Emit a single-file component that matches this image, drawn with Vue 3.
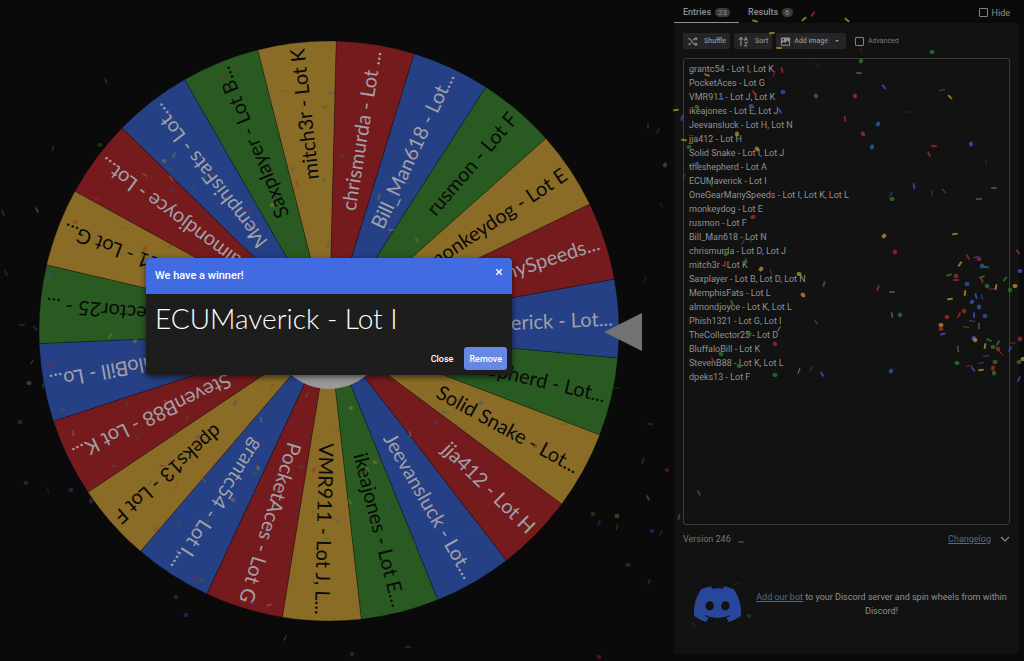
<script setup>
import { ref, computed } from 'vue'

const entries = [
  ['grantc54 - Lot I, Lot K', 'grantc54 - Lot I,...'],
  ['PocketAces - Lot G', 'PocketAces - Lot G'],
  ['VMR911 - Lot J, Lot K', 'VMR911 - Lot J, L...'],
  ['ikeajones - Lot E, Lot J', 'ikeajones - Lot E...'],
  ['Jeevansluck - Lot H, Lot N', 'Jeevansluck - Lot...'],
  ['jja412 - Lot H', 'jja412 - Lot H'],
  ['Solid Snake - Lot I, Lot J', 'Solid Snake - Lot...'],
  ['theshepherd - Lot A', 'theshepherd - Lot...'],
  ['ECUMaverick - Lot I', 'ECUMaverick - Lot...'],
  ['OneGearManySpeeds - Lot I, Lot K, Lot L', 'OneGearManySpeeds...'],
  ['monkeydog - Lot E', 'monkeydog - Lot E'],
  ['rusmon - Lot F', 'rusmon - Lot F'],
  ['Bill_Man618 - Lot N', 'Bill_Man618 - Lot...'],
  ['chrismurda - Lot D, Lot J', 'chrismurda - Lot ...'],
  ['mitch3r - Lot K', 'mitch3r - Lot K'],
  ['Saxplayer - Lot B, Lot D, Lot N', 'Saxplayer - Lot B...'],
  ['MemphisFats - Lot L', 'MemphisFats - Lot...'],
  ['almondjoyce - Lot K, Lot L', 'almondjoyce - Lot...'],
  ['Phish1321 - Lot G, Lot I', 'Phish1321 - Lot G...'],
  ['TheCollector25 - Lot D', 'TheCollector25 - ...'],
  ['BluffaloBill - Lot K', 'BluffaloBill - Lo...'],
  ['StevenB88 - Lot K, Lot L', 'StevenB88 - Lot K...'],
  ['dpeks13 - Lot F', 'dpeks13 - Lot F']
]
const text = ref(entries.map(e => e[0]).join('\n'))
const hidden = ref(false)
const advanced = ref(false)
const open = ref(true)

const CX = 329
const CY = 331
const R = 290
const winner = 8
const step = 360 / entries.length
const palette = ['blue', 'red', 'gold', 'green']
const point = a => {
  const r = (a * Math.PI) / 180
  return `${(CX + R * Math.cos(r)).toFixed(2)} ${(CY + R * Math.sin(r)).toFixed(2)}`
}
const slices = computed(() =>
  entries.map(([, label], i) => {
    const angle = -2.5 - (i - winner) * step
    const tone = i === entries.length - 1 ? 'gold' : palette[i % 4]
    return {
      label,
      tone,
      angle,
      d: `M${CX} ${CY}L${point(angle - step / 2)}A${R} ${R} 0 0 1 ${point(angle + step / 2)}Z`
    }
  })
)

// Each piece: x, y, colour, shape (o oval, s strip, t thin), angle
const bright = `755,21,y,s,15 772,33,y,s,-8 779,48,y,s,0 804,19,y,s,-40 813,14,r,s,-55 847,20,y,s,40 932,52,g,o,0 861,61,g,o,-50
859,73,g,s,0 782,70,r,s,75 774,74,r,t,-70 707,75,y,s,20 754,93,r,s,60 783,92,b,o,-10 816,96,g,o,80 855,96,r,o,70 884,87,b,s,50
942,90,b,t,-15 950,97,y,s,45 721,99,b,s,0 751,106,b,o,10 697,107,g,o,20 676,110,y,s,-10 682,118,b,s,-75 780,111,b,s,60 845,119,r,s,75
878,124,b,o,-50 863,134,r,o,35 737,134,y,o,90 684,140,y,s,5 689,147,g,o,-20 872,147,b,o,-65 934,146,r,s,5 929,154,r,s,65 971,144,b,o,70
757,149,y,o,45 697,164,b,o,70 684,177,r,t,-65 711,184,g,s,60 914,186,b,s,80 891,194,b,t,-60 892,199,g,o,10 944,191,g,t,50 932,193,r,t,75
994,188,g,s,0 979,199,y,t,0 753,217,r,o,-15 884,236,y,o,-40 955,234,y,s,-5 895,252,r,o,-50 726,254,g,o,-30 710,238,b,o,70 743,242,b,t,-60
750,240,g,t,60 1018,252,r,s,50 968,257,r,s,65 976,257,b,t,-20 979,259,r,o,10 745,261,g,s,-60 725,264,r,s,-80 761,269,y,o,-55 771,272,r,t,65
799,274,y,o,0 824,284,g,s,-70 878,288,r,s,-65 892,292,g,s,0 803,295,y,o,35 732,303,g,s,70 816,322,g,t,60 892,315,g,s,80 900,315,g,o,55
779,329,y,t,-60 749,334,g,o,0 775,344,r,o,40 721,354,g,o,20 713,360,r,s,60 739,366,g,o,30 775,375,g,o,0 799,371,y,t,-70 811,369,r,t,-65
822,374,b,s,60 891,371,b,o,-50 960,264,y,s,-55 982,266,b,o,-60 986,267,g,s,5 949,275,g,s,-15 956,276,r,o,0 956,280,r,s,0 982,277,g,s,-20
982,280,r,s,70 1005,279,g,s,-50 1020,271,b,o,0 967,284,b,o,15 987,286,g,o,40 992,289,r,t,0 996,287,y,s,-80 1010,290,g,o,70 1015,286,y,o,0
965,293,y,s,-80 950,299,y,s,-10 976,296,b,s,75 982,297,b,t,80 972,302,b,o,-40 979,307,b,o,80 964,311,r,o,40 959,315,r,s,-65 947,317,r,o,5
974,315,b,s,90 985,316,b,o,25 972,321,b,t,10 941,325,y,o,0 941,329,r,o,0 943,334,b,s,-15 966,327,g,t,10 979,326,y,t,90 974,338,b,o,20
975,340,y,o,20 958,349,y,t,85 985,346,y,s,-80 989,340,g,s,25 993,347,g,o,0 998,349,r,o,70 998,343,g,s,-60 1001,353,r,t,45 1010,349,b,s,-65
1013,343,r,t,0 1020,339,r,o,-55 957,363,g,o,10 969,366,r,t,-15 973,369,b,s,55 981,370,y,s,-5 981,363,b,t,-10 986,356,b,t,-10 995,362,g,o,0
993,368,r,o,-60 994,373,g,o,70 1019,362,g,o,-20 1023,359,y,o,0 1019,379,b,s,-65`
const faint = `861,50,r,t,80 906,112,r,t,0 817,65,r,t,45 986,162,b,t,90 699,493,y,s,65 679,517,y,s,-75 741,542,y,s,0 737,584,r,t,-10 749,616,g,o,20 699,602,r,s,0 694,625,b,t,50
106,81,b,s,65 53,148,r,s,-70 100,145,g,o,0 3,213,g,s,65 37,210,y,s,65 237,66,r,s,0 223,76,r,o,80 283,91,g,t,0 331,93,b,s,0 325,107,g,o,-10
232,148,r,s,-70 174,155,y,s,-60 164,161,y,o,30 170,169,g,s,0 145,175,y,s,30 152,177,g,t,-80 171,178,y,s,60 193,187,g,s,-40 172,190,b,s,-30
213,174,r,o,0 227,176,g,t,55 221,185,g,s,20 204,177,g,o,70 292,169,g,o,0 297,183,r,s,60 324,180,g,s,-75 272,205,y,o,-50 250,210,r,o,20
97,199,r,s,10 127,207,g,t,0 126,228,g,t,0 75,222,r,o,0 145,249,r,o,-70 169,247,r,s,-45 295,240,b,o,80 303,249,r,s,-10 328,245,b,s,-80
648,126,r,s,85 658,131,r,s,-60 665,165,y,o,-60 661,205,b,t,55 342,155,g,s,40 414,156,r,s,20 407,183,g,s,0 379,197,y,s,-75 391,230,y,s,0
417,240,y,s,60 6,273,r,s,60 35,328,b,s,60 22,325,y,t,0 32,362,y,t,-60 29,383,y,o,-10 20,422,g,o,20 43,386,g,s,-80 50,276,b,o,0 143,256,g,s,0
110,336,y,s,-50 117,334,b,s,80 135,341,y,o,90 112,361,r,s,0 50,366,r,s,0 62,410,g,o,0 127,403,g,s,-65 166,402,y,s,45 235,403,b,o,-60
187,418,g,s,-65 261,420,y,s,70 272,386,r,t,-65 307,395,y,t,-60 73,433,y,s,80 138,437,b,s,-50 174,434,g,s,-80 198,437,b,o,30 645,280,g,t,-75
650,424,b,s,10 617,388,g,t,0 481,403,b,o,0 444,412,b,s,20 435,423,b,s,-60 389,404,b,t,0 351,408,y,o,-10 343,386,y,s,0 564,424,g,s,0
410,434,y,s,80 457,400,r,s,10 338,430,g,s,30 357,426,r,s,0 26,483,g,o,10 48,490,r,t,80 71,490,b,o,0 91,501,b,o,70 176,597,g,o,20 186,615,b,o,-10
285,638,y,t,-65 114,466,g,s,0 162,466,r,s,0 150,483,g,s,-70 176,487,r,t,-70 179,523,g,o,-60 156,529,r,s,-50 208,521,g,o,-30 233,500,y,o,0
258,468,y,o,60 255,474,g,o,30 301,467,g,s,0 314,470,r,o,70 255,494,b,t,10 196,579,r,o,30 202,580,g,o,0 252,603,b,o,70 269,605,y,s,-15
326,539,g,o,0 338,521,b,s,-50 204,480,y,t,40 643,461,g,s,-65 667,470,r,o,0 648,498,y,s,65 593,514,g,o,0 617,516,y,o,0 599,523,b,s,-65
617,527,y,t,-80 652,531,b,o,30 661,533,r,s,-65 628,565,g,o,0 649,582,g,s,-70 352,654,b,o,-70 408,647,r,s,0 599,657,r,o,0 472,532,g,s,-60
388,507,b,s,-80 415,545,r,s,70 434,462,r,t,-10 515,474,r,t,10 488,506,r,t,0 535,446,r,o,0 375,462,y,o,10 367,470,y,o,40 350,502,y,s,60`
const size = { o: [5, 4, 2], s: [6, 2, 1], t: [6, 1, 0] }
const parse = (src, kind) =>
  src.trim().split(/\s+/).map(p => {
    const [x, y, tone, shape, angle] = p.split(',')
    const [w, h, r] = size[shape]
    return { x: +x, y: +y, tone, angle, w, h, r, kind }
  })
const confetti = [...parse(faint, 'faint'), ...parse(bright, 'bright')]
</script>

<template>
  <div class="page">
    <main class="stage">
      <svg class="wheel" viewBox="0 0 658 661" role="img" aria-label="Wheel of names">
        <path v-for="s in slices" :key="s.label" :class="['slice', s.tone]" :d="s.d" />
        <text
          v-for="s in slices"
          :key="'t' + s.label"
          :class="['label', 'on-' + s.tone]"
          x="613"
          y="338"
          :transform="`rotate(${s.angle} ${CX} ${CY})`"
        >{{ s.label }}</text>
        <circle :cx="CX" :cy="CY" r="58" class="hub" />
        <path d="M604 332L642 313V351Z" class="pointer" />
      </svg>
      <section v-if="open" class="dialog" role="dialog" aria-labelledby="dialog-title">
        <header class="dialog-head">
          <h2 id="dialog-title">We have a winner!</h2>
          <button class="dismiss" type="button" aria-label="Dismiss" @click="open = false">
            <svg viewBox="0 0 8 8"><path d="M1.2 1.2L6.8 6.8M6.8 1.2L1.2 6.8" /></svg>
          </button>
        </header>
        <p class="winner">{{ entries[winner][0] }}</p>
        <footer class="dialog-foot">
          <button class="btn-text" type="button" @click="open = false">Close</button>
          <button class="btn-text primary" type="button">Remove</button>
        </footer>
      </section>
    </main>

    <aside class="side">
      <nav class="tabs">
        <button class="tab active" type="button">Entries <span class="count">23</span></button>
        <button class="tab" type="button">Results <span class="count">6</span></button>
        <label class="check hide"><input v-model="hidden" type="checkbox" />Hide</label>
      </nav>
      <div class="panel">
        <div class="toolbar">
          <button class="tool" type="button">
            <svg class="icon" viewBox="0 0 12 12"><path d="M1 3H3L8 9H10.6M1 9H3L4.3 7.4M6.6 4.6L8 3H10.6M9.2 1.4L10.9 3L9.2 4.6M9.2 7.4L10.9 9L9.2 10.6" /></svg>
            <span>Shuffle</span>
          </button>
          <button class="tool" type="button">
            <svg class="icon" viewBox="0 0 12 12"><path d="M3.200 11V2M1 4L3.200 1.600L5.400 4" /><path class="fine" d="M6.800 5.400L8.600 1.200L10.400 5.400M7.400 4H9.800M6.900 7H10.200L6.900 10.800H10.400" /></svg>
            <span>Sort</span>
          </button>
          <button class="tool image" type="button">
            <svg class="icon solid" viewBox="0 0 12 12"><path fill-rule="evenodd" d="M2 1.5H10A1 1 0 0 1 11 2.500V9.500A1 1 0 0 1 10 10.500H2A1 1 0 0 1 1 9.500V2.500A1 1 0 0 1 2 1.500ZM2 9.500H10V7L8 5L5.500 7.500L4 6.200L2 8ZM3.500 3A1 1 0 1 0 3.500 5A1 1 0 1 0 3.500 3Z" /></svg>
            <span>Add image</span>
            <svg class="caret" viewBox="0 0 6 4"><path d="M1 1H5L3 3Z" /></svg>
          </button>
          <label class="check small"><input v-model="advanced" type="checkbox" />Advanced</label>
        </div>
        <textarea v-model="text" class="entries" aria-label="Entries" spellcheck="false"></textarea>
        <div class="version">
          <span>Version 246</span>
          <a href="#changelog">Changelog</a>
          <svg class="chevron" viewBox="0 0 10 10"><path d="M1 3L5 7L9 3" /></svg>
        </div>
        <div class="bot">
          <svg class="discord" viewBox="0 0 127 96" aria-label="Discord" role="img">
            <path d="M107.700 8.070A105.150 105.150 0 0 0 81.470 0a72.060 72.060 0 0 0-3.360 6.830 97.680 97.680 0 0 0-29.110 0A72.370 72.370 0 0 0 45.640 0a105.890 105.890 0 0 0-26.250 8.090C2.790 32.650-1.710 56.600.54 80.210a105.730 105.730 0 0 0 32.170 16.150 77.700 77.700 0 0 0 6.890-11.110 68.420 68.420 0 0 1-10.850-5.180c.91-.66 1.800-1.340 2.660-2a75.570 75.570 0 0 0 64.320 0c.87.71 1.760 1.390 2.660 2a68.680 68.680 0 0 1-10.870 5.190 77 77 0 0 0 6.890 11.100 105.250 105.250 0 0 0 32.190-16.140c2.640-27.380-4.510-51.110-18.900-72.150ZM42.450 65.690C36.180 65.690 31 60 31 53s5-12.740 11.430-12.740S54 46 53.890 53s-5.050 12.690-11.440 12.690Zm42.240 0C78.410 65.690 73.250 60 73.250 53s5-12.740 11.440-12.740S96.230 46 96.120 53s-5.040 12.690-11.430 12.690Z" />
          </svg>
          <p><a href="#bot">Add our bot</a> to your Discord server and spin wheels from within Discord!</p>
        </div>
      </div>
    </aside>

    <svg class="confetti" viewBox="0 0 1024 661" preserveAspectRatio="none" aria-hidden="true">
      <rect
        v-for="(c, i) in confetti"
        :key="i"
        :class="['bit', c.tone, c.kind]"
        :x="c.x - c.w / 2"
        :y="c.y - c.h / 2"
        :width="c.w"
        :height="c.h"
        :rx="c.r"
        :transform="`rotate(${c.angle} ${c.x} ${c.y})`"
      />
    </svg>
  </div>
</template>

<style>
body {
  background: #0a0a0a;
}
</style>

<style scoped>
.page {
  position: relative;
  box-sizing: border-box;
  min-height: 100vh;
  display: grid;
  grid-template-columns: minmax(0, 658fr) minmax(0, 345fr);
  gap: 16px;
  padding-right: 5px;
  overflow: hidden;
  background: #0a0a0a;
  color: #909090;
  font-family: Roboto, "Liberation Sans", sans-serif;
  font-size: 9px;
}
button {
  border: 0;
  padding: 0;
  background: none;
  color: inherit;
  font: inherit;
  font-weight: 500;
  cursor: pointer;
}
p, h2 { margin: 0; }
a { color: #4a6f8c; text-decoration: underline; }

.stage { position: relative; }
.wheel { display: block; width: 100%; height: auto; }
.slice { stroke: #000; stroke-opacity: 0.25; stroke-width: 1; }
.slice.blue { fill: #264086; }
.slice.red { fill: #751b1d; }
.slice.gold { fill: #8a6c26; }
.slice.green { fill: #295a22; }
.label { font-family: Lato, sans-serif; font-size: 20px; text-anchor: end; }
.on-blue, .on-red { fill: #a0a0a6; }
.on-gold, .on-green { fill: #0a0a08; }
.hub { fill: #999; }
.pointer { fill: #727272; }

.dialog {
  position: absolute;
  z-index: 2;
  top: 258px;
  left: 50%;
  transform: translateX(-50%);
  width: 366px;
  border-radius: 4px;
  overflow: hidden;
  background: #1d1d1d;
  color: #fff;
  box-shadow: 0 2px 6px rgba(0, 0, 0, 0.6);
}
.dialog-head {
  display: flex;
  justify-content: space-between;
  height: 36px;
  padding: 0 9px;
  background: #416be0;
}
.dialog-head h2 { font-size: 11px; font-weight: 500; line-height: 36px; }
.dismiss { width: 8px; height: 8px; margin-top: 10px; line-height: 8px; }
.dismiss svg { display: block; width: 8px; height: 8px; fill: none; stroke: #fff; stroke-width: 1.3; }
.winner { padding: 4px 9px 0; font-family: Lato, sans-serif; font-weight: 300; font-size: 28px; line-height: 40px; }
.dialog-foot { display: flex; justify-content: flex-end; gap: 6px; padding: 9px 5px 5px; }
.btn-text { height: 23px; padding: 0 5px; border-radius: 3px; }
.primary { background: #6688e4; }

.side { display: flex; flex-direction: column; padding-bottom: 7px; }
.tabs { display: flex; align-items: stretch; height: 23px; }
.tab { display: flex; align-items: center; gap: 4px; padding: 2px 9px 0; border-bottom: 1px solid transparent; }
.tab.active { border-bottom-color: #8f8f8f; }
.count { padding: 0 3px; border-radius: 5px; background: #3a3a3a; font-size: 8px; font-weight: 400; line-height: 9px; }
.check { display: flex; align-items: center; gap: 4px; }
.hide { margin-left: auto; padding: 2px 9px 0 0; }
.check input {
  appearance: none;
  box-sizing: border-box;
  width: 9px;
  height: 9px;
  margin: 0;
  border: 1px solid #848484;
  border-radius: 1px;
}
.small { margin-left: 5px; font-size: 7px; color: #7d7d7d; }
.panel {
  flex: 1;
  display: flex;
  flex-direction: column;
  padding: 10px 9px 0;
  border-radius: 4px;
  background: #121212;
}
.toolbar { display: flex; gap: 4px; height: 16px; }
.tool {
  display: flex;
  align-items: center;
  gap: 6px;
  padding: 0 4px;
  border-radius: 2px;
  background: #252525;
  font-size: 7px;
}
.icon { width: 11px; height: 11px; fill: none; stroke: #909090; stroke-width: 1.2; }
.icon.solid { fill: #909090; stroke: none; }
.fine { stroke-width: 1; }
.image { gap: 3px; }
.caret { width: 6px; height: 4px; margin: 0 2px 0 3px; fill: #909090; }
.entries {
  flex: 1;
  box-sizing: border-box;
  width: 100%;
  margin: 9px 0 0;
  padding: 3px 5px;
  border: 1px solid #3c3c3c;
  border-radius: 3px;
  outline: 0;
  resize: none;
  background: transparent;
  color: #919191;
  font: inherit;
  line-height: 14px;
}
.version { display: flex; align-items: center; gap: 9px; height: 28px; color: #767676; }
.version a { margin-left: auto; }
.chevron { width: 10px; height: 10px; fill: none; stroke: #8c8c8c; stroke-width: 1.2; }
.bot { display: flex; align-items: center; gap: 12px; height: 101px; padding-left: 11px; }
.discord { flex: none; width: 47px; height: 36px; fill: #28479a; }
.bot p { flex: 1; text-align: center; line-height: 14px; }

.confetti { position: absolute; z-index: 1; inset: 0; width: 100%; height: 100%; pointer-events: none; }
.bit.r { fill: #98282a; }
.bit.g { fill: #2c6e2a; }
.bit.b { fill: #2d50b0; }
.bit.y { fill: #a88230; }
.bit.faint { opacity: 0.4; }
.bit.bright { opacity: 0.85; }
</style>
